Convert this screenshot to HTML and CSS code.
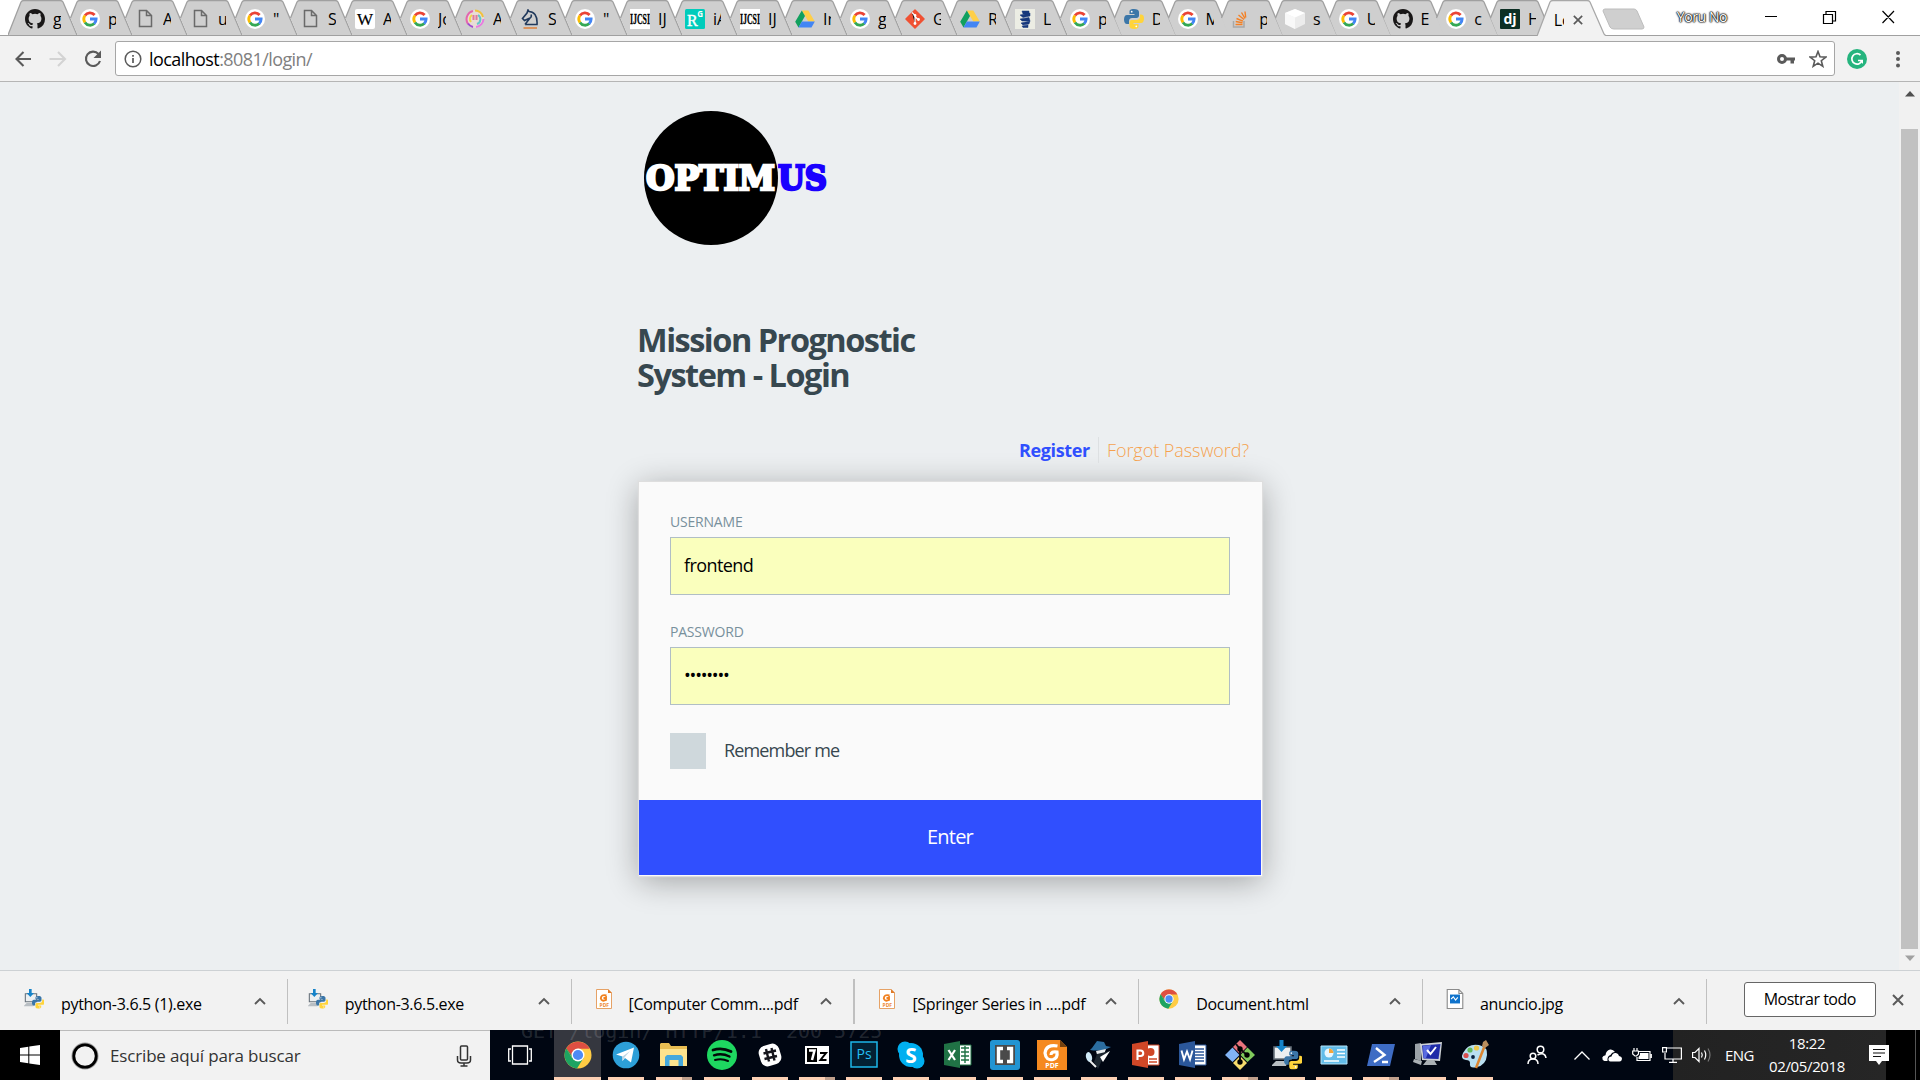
FILE: index.html
```html
<!DOCTYPE html>
<html lang="es">
<head>
<meta charset="utf-8">
<title>Login</title>
<link rel="stylesheet" href="styles.css">
</head>
<body>
<svg class="defs" aria-hidden="true">
  <symbol id="tab" viewBox="0 0 70 35"><path d="M14.500 35 7.500 18 14 2Q15 .5 17 .5H52Q54 .5 55 2L69 35Z" fill="#cfcfcf"/><path d="M7.500 18 14 2Q15 .5 17 .5H52Q54 .5 55 2L69 35" fill="none" stroke="#a0a0a0" stroke-width="1.300"/></symbol>
  <symbol id="tab-first" viewBox="0 0 70 35"><path d="M0 35 13 2Q14 .5 16 .5H52Q54 .5 55 2L69 35" fill="#cfcfcf" stroke="#a0a0a0" stroke-width="1.300"/></symbol>
  <symbol id="tab-active" viewBox="0 0 70 36"><path d="M0 36 13 2Q14 .5 16 .5H50Q52 .5 53 2L67 34 69 36" fill="#f2f2f2" stroke="#a8a8a8" stroke-width="1.300"/></symbol>
  <symbol id="github" viewBox="0 0 16 16"><path fill="#191717" d="M8 0C3.580 0 0 3.580 0 8c0 3.540 2.290 6.530 5.470 7.590.4.070.55-.17.55-.38 0-.19-.01-.82-.01-1.490-2.010.37-2.530-.49-2.690-.94-.09-.23-.48-.94-.82-1.130-.28-.15-.68-.52-.01-.53.63-.01 1.080.58 1.230.82.72 1.210 1.870.87 2.330.66.070-.52.28-.87.51-1.070-1.780-.2-3.640-.89-3.640-3.950 0-.87.31-1.590.82-2.150-.08-.2-.36-1.020.08-2.120 0 0 .67-.21 2.200.82a7.600 7.600 0 0 1 4 0c1.530-1.040 2.200-.82 2.200-.82.44 1.100.16 1.920.08 2.120.51.56.82 1.270.82 2.150 0 3.070-1.870 3.750-3.650 3.950.29.25.54.73.54 1.480 0 1.070-.01 1.930-.01 2.200 0 .21.15.46.55.38A8 8 0 0 0 16 8c0-4.420-3.580-8-8-8z"/></symbol>
  <symbol id="google" viewBox="0 0 20 20"><circle cx="10" cy="10" r="10" fill="#fff"/><g fill="none" stroke-width="2.900"><path d="M5 6.500A6.100 6.100 0 0 1 14.600 6" stroke="#ea4335"/><path d="M5 13.500A6.100 6.100 0 0 1 5 6.500" stroke="#fbbc05"/><path d="M14.300 14.500A6.100 6.100 0 0 1 5 13.500" stroke="#34a853"/><path d="M10 10H16.100A6.100 6.100 0 0 1 14.100 14.600" stroke="#4285f4"/></g></symbol>
  <symbol id="doc" viewBox="0 0 20 20"><path d="M4.500 1.500H11.500L16.500 6.500V17.500H4.500ZM11.500 1.500V6.500H16.500" fill="none" stroke="#6a6a6a" stroke-width="1.500"/></symbol>
  <symbol id="wiki" viewBox="0 0 20 20"><rect width="20" height="20" rx="2" fill="#fff"/><text x="10" y="15.500" font-family="Liberation Serif" font-size="17" text-anchor="middle" fill="#000" stroke="#000" stroke-width=".2">W</text></symbol>
  <symbol id="ring" viewBox="0 0 20 20"><circle cx="10" cy="10" r="9" fill="#e9dcd6"/><g fill="none" stroke-width="2"><path d="M3 15A8.500 8.500 0 0 1 8 2" stroke="#e466ae"/><path d="M10 1.500A8.500 8.500 0 0 1 18 8" stroke="#f0c23c"/><path d="M18.500 10A8.500 8.500 0 0 1 11 18" stroke="#e87be0"/><path d="M8 18A8.500 8.500 0 0 1 3 14.500" stroke="#a04ad0"/><path d="M6 13A5 5 0 0 1 7 6" stroke="#efd548"/><path d="M13 6A5 5 0 0 1 12 15" stroke="#64c7c9"/><path d="M8.500 6V11M11.500 6V11" stroke="#e07a9c"/></g></symbol>
  <symbol id="knight" viewBox="0 0 20 20"><path d="M5 15.500H17Q17.500 9 15 5.500 12.500 2.500 9 2.500L8 1 7 4 2.500 9.500 4.500 11.500 10 9 5 15.500M10 9Q12 8 11 5.500" fill="none" stroke="#20395c" stroke-width="1.600"/><path d="M3.500 19H17" stroke="#dc8a4b" stroke-width="1.700"/></symbol>
  <symbol id="ijcsi" viewBox="0 0 20 20"><path fill="#fff" d="M0 0H20V20H0Z"/><text x="0" y="14.500" font-family="Liberation Serif" font-weight="bold" font-size="14" textLength="20" lengthAdjust="spacingAndGlyphs" stroke="#000" stroke-width=".3">IJCSI</text></symbol>
  <symbol id="rg" viewBox="0 0 20 20"><rect width="20" height="20" rx="1.500" fill="#00ccbb"/><text x="2" y="17" font-family="Liberation Serif" font-size="16" fill="#fff" stroke="#fff" stroke-width=".4">R</text><text x="12.200" y="8" font-family="Open Sans" font-weight="bold" font-size="8" fill="#fff">G</text></symbol>
  <symbol id="drive" viewBox="0 0 20 20"><path d="M6.800 1.500H13.300L19.800 12.600H13.300Z" fill="#ffcf48"/><path d="M6.800 1.500 10 7 3.500 18.500.2 12.800Z" fill="#11a05e"/><path d="M6.800 12.600H19.800L16.500 18.500H3.500Z" fill="#4285f4"/></symbol>
  <symbol id="git" viewBox="0 0 20 20"><path d="M10 1 19 10 10 19 1 10Z" fill="#f05133" stroke="#f05133" stroke-width="1.500" stroke-linejoin="round"/><path d="M7 3.500 10 6.500V15M10 7.500 13.500 11" stroke="#fff" stroke-width="1.200"/><g fill="#fff"><circle cx="10" cy="6.500" r="1.400"/><circle cx="10" cy="14.500" r="1.400"/><circle cx="13.500" cy="10.500" r="1.400"/></g></symbol>
  <symbol id="leaf" viewBox="0 0 20 20"><path d="M0 0H20V20H0Z" fill="#ecede4"/><path d="M7 2H14V5H8ZM5 6 15 4V7L8 8.500ZM5 10 14 8.500 15 12 7 12ZM6 14 15 12 14 15 8 16ZM7 17 13 16V18.500H8Z" fill="#17387c" stroke="#17387c" stroke-width=".5"/></symbol>
  <symbol id="python" viewBox="0 0 20 20"><path d="M10 0C6 0 5.500 1.400 5.500 3V5H10.500V6H3C1 6 0 8 0 10.500S1 15 3 15H5V12C5 10 6.500 9 8 9H12.500C14 9 15 8 15 6.500V3C15 1 13 0 10 0Z" fill="#3b76a8"/><path d="M10 20C14 20 14.500 18.600 14.500 17V15H9.500V14H17C19 14 20 12 20 9.500S19 5.500 17 5.500H16V8C16 10 14 11 12.500 11H8C6 11 5.500 12 5.500 13.500V17C5.500 19 7 20 10 20Z" fill="#ffd43b"/><circle cx="7.700" cy="2.700" r=".9" fill="#fff"/><circle cx="12.300" cy="17.300" r=".9" fill="#fff"/></symbol>
  <symbol id="stack" viewBox="0 0 20 20"><path d="M2.500 12V18H13V12" fill="none" stroke="#a8a8a8" stroke-width="1.500"/><path d="M4.500 15.500H11.500M4.700 12.500 11.500 13.800M5.500 9.500 12 12.200M7.500 6 13 10.500M10.500 3.500 14 9.500M14 2.500 14.700 8.500" stroke="#f48024" stroke-width="1.400"/></symbol>
  <symbol id="cube" viewBox="0 0 20 20"><path d="M10 0 20 4V15L10 20 0 15V4Z" fill="#ececec"/><path d="M0 4 10 8.500V20L0 15Z" fill="#f8f8f8"/><path d="M0 4 10 0 20 4 10 8.500Z" fill="#fff"/></symbol>
  <symbol id="django" viewBox="0 0 20 20"><rect width="20" height="20" rx="1" fill="#0c2f24"/><text x="10" y="15" text-anchor="middle" font-family="Open Sans" font-weight="bold" font-size="14" fill="#fff">dj</text></symbol>
  <symbol id="chrome" viewBox="0 0 28 28"><circle cx="14" cy="14" r="13.500" fill="#fc4"/><path d="M2.300 7.300A13.500 13.500 0 0 0 13 27.500L19.500 17 14 14 8 17Z" fill="#1da462"/><path d="M2.300 7.300 8.200 17 14 14 14 7.300Z" fill="#1da462"/><path d="M2.300 7.300A13.500 13.500 0 0 1 25.700 7.800H14Q8.500 8.500 7.800 14.500Z" fill="#de4f42"/><circle cx="14" cy="14" r="6.500" fill="#fff"/><circle cx="14" cy="14" r="5.100" fill="#4c8bf5"/></symbol>
  <symbol id="installer" viewBox="0 0 30 30"><path d="M2 7H19V19H2Z" fill="#eceff1" stroke="#66707a" stroke-width="1.600"/><path d="M0 25 4 21H16L14 26H0Z" fill="#b8bec3"/><path d="M7.500 0H11.500V6H15L9.500 12 4 6H7.500Z" fill="#1583c9"/><svg x="12" y="10" width="19" height="20" viewBox="0 0 20 20"><use href="#python"/></svg></symbol>
  <symbol id="pdf" viewBox="0 0 16 20"><path d="M.5.500H12L15.500 4V19.500H.5Z" fill="#fff" stroke="#e6a266"/><path d="M12 0V4H16Z" fill="#e07b28"/><path d="M10.500 6.500Q5 5 4.800 9.500 6 13 10 11V8.500L7.500 9.500" fill="none" stroke="#f0801f" stroke-width="1.900"/><text x="3.500" y="17.500" font-family="Open Sans" font-weight="bold" font-size="5" fill="#ee8a35">PDF</text></symbol>
  <symbol id="image" viewBox="0 0 15 18"><path d="M.5.500H11L14.500 4V17.500H.5ZM11 .5V4H14.500" fill="#fff" stroke="#8b8b8b"/><path d="M3 5H12V13H3Z" fill="#0f73cc"/><path d="M4 9 6 7 8 10 10 7.500" fill="none" stroke="#fff"/></symbol>
  <symbol id="chevron" viewBox="0 0 12 8"><path d="M1 7 6 2 11 7" fill="none" stroke="#5a5a5a" stroke-width="1.900"/></symbol>
  <symbol id="cross" viewBox="0 0 12 12"><path d="M1 1 11 11M11 1 1 11" stroke="#5a5a5a" stroke-width="2"/></symbol>
</svg>

<header class="tabstrip">
  <nav class="tabs">
    <div class="tab"><svg class="shape"><use href="#tab-first"/></svg><svg class="fav"><use href="#github"/></svg><span>g</span></div>
    <div class="tab"><svg class="shape"><use href="#tab"/></svg><svg class="fav"><use href="#google"/></svg><span>p</span></div>
    <div class="tab"><svg class="shape"><use href="#tab"/></svg><svg class="fav"><use href="#doc"/></svg><span>A</span></div>
    <div class="tab"><svg class="shape"><use href="#tab"/></svg><svg class="fav"><use href="#doc"/></svg><span>u</span></div>
    <div class="tab"><svg class="shape"><use href="#tab"/></svg><svg class="fav"><use href="#google"/></svg><span>"</span></div>
    <div class="tab"><svg class="shape"><use href="#tab"/></svg><svg class="fav"><use href="#doc"/></svg><span>S</span></div>
    <div class="tab"><svg class="shape"><use href="#tab"/></svg><svg class="fav"><use href="#wiki"/></svg><span>A</span></div>
    <div class="tab"><svg class="shape"><use href="#tab"/></svg><svg class="fav"><use href="#google"/></svg><span>Jo</span></div>
    <div class="tab"><svg class="shape"><use href="#tab"/></svg><svg class="fav"><use href="#ring"/></svg><span>A</span></div>
    <div class="tab"><svg class="shape"><use href="#tab"/></svg><svg class="fav"><use href="#knight"/></svg><span>S</span></div>
    <div class="tab"><svg class="shape"><use href="#tab"/></svg><svg class="fav"><use href="#google"/></svg><span>"</span></div>
    <div class="tab"><svg class="shape"><use href="#tab"/></svg><svg class="fav"><use href="#ijcsi"/></svg><span>IJ</span></div>
    <div class="tab"><svg class="shape"><use href="#tab"/></svg><svg class="fav"><use href="#rg"/></svg><span>iA</span></div>
    <div class="tab"><svg class="shape"><use href="#tab"/></svg><svg class="fav"><use href="#ijcsi"/></svg><span>IJ</span></div>
    <div class="tab"><svg class="shape"><use href="#tab"/></svg><svg class="fav"><use href="#drive"/></svg><span>In</span></div>
    <div class="tab"><svg class="shape"><use href="#tab"/></svg><svg class="fav"><use href="#google"/></svg><span>g</span></div>
    <div class="tab"><svg class="shape"><use href="#tab"/></svg><svg class="fav"><use href="#git"/></svg><span>G</span></div>
    <div class="tab"><svg class="shape"><use href="#tab"/></svg><svg class="fav"><use href="#drive"/></svg><span>R</span></div>
    <div class="tab"><svg class="shape"><use href="#tab"/></svg><svg class="fav"><use href="#leaf"/></svg><span>L</span></div>
    <div class="tab slim"><svg class="shape"><use href="#tab"/></svg><svg class="fav"><use href="#google"/></svg><span>p</span></div>
    <div class="tab slim"><svg class="shape"><use href="#tab"/></svg><svg class="fav"><use href="#python"/></svg><span>D</span></div>
    <div class="tab slim"><svg class="shape"><use href="#tab"/></svg><svg class="fav"><use href="#google"/></svg><span>M</span></div>
    <div class="tab slim"><svg class="shape"><use href="#tab"/></svg><svg class="fav"><use href="#stack"/></svg><span>p</span></div>
    <div class="tab slim"><svg class="shape"><use href="#tab"/></svg><svg class="fav"><use href="#cube"/></svg><span>s</span></div>
    <div class="tab slim"><svg class="shape"><use href="#tab"/></svg><svg class="fav"><use href="#google"/></svg><span>U</span></div>
    <div class="tab slim"><svg class="shape"><use href="#tab"/></svg><svg class="fav"><use href="#github"/></svg><span>E</span></div>
    <div class="tab slim"><svg class="shape"><use href="#tab"/></svg><svg class="fav"><use href="#google"/></svg><span>c</span></div>
    <div class="tab slim"><svg class="shape"><use href="#tab"/></svg><svg class="fav"><use href="#django"/></svg><span>H</span></div>
    <div class="tab active"><svg class="shape"><use href="#tab-active"/></svg><span>Lo</span><svg class="close"><use href="#cross"/></svg></div>
  </nav>
  <svg class="newtab" viewBox="0 0 43 22"><path d="M3 1H32Q34 1 35 3L42 19Q42 21 40 21H12Q9 21 8 19L1 3Q1 1 3 1Z" fill="#cfcfcf" stroke="#bdbdbd"/></svg>
  <span class="profile">Yoru No</span>
  <svg class="winbtns" viewBox="0 0 130 14" fill="none" stroke="#000" stroke-width="1.200"><path d="M0 6.500H12M58.500 4.500H67.500V13.500H58.500ZM61 4V1.500H70.500V11H68M117.500 1 129 13M129 1 117.500 13"/></svg>
</header>

<div class="toolbar">
  <svg class="nav" viewBox="0 0 96 20" fill="none" stroke-width="2.100"><path d="M17 10H2.500M9.500 3 2.500 10 9.500 17" stroke="#5a5a5a"/><path d="M35.500 10H51M44 3 51 10 44 17" stroke="#d3d3d3"/><path d="M84.500 5A7.200 7.200 0 1 0 86 12" stroke="#5a5a5a"/><path d="M87 1.500V9H79.500Z" fill="#5a5a5a"/></svg>
  <div class="omnibox">
    <svg class="info" viewBox="0 0 18 18"><circle cx="9" cy="9" r="7.800" fill="none" stroke="#5a5a5a" stroke-width="1.500"/><path d="M9 8V13M9 5V6.700" stroke="#5a5a5a" stroke-width="1.700"/></svg>
    <span class="url">localhost<i>:8081/login/</i></span>
    <svg class="key" viewBox="0 0 18 12"><circle cx="5" cy="6" r="3.500" fill="none" stroke="#5a5a5a" stroke-width="3"/><path d="M9 4.500H18V7.500H17V10.500H13.500V7.500H9Z" fill="#5a5a5a"/></svg>
    <svg class="star" viewBox="0 0 18 18"><path d="M9 1.500 11 6.800 16.800 7.100 12.300 10.700 13.800 16.300 9 13.200 4.200 16.300 5.700 10.700 1.200 7.100 7 6.800Z" fill="none" stroke="#5a5a5a" stroke-width="1.600"/></svg>
  </div>
  <svg class="gram" viewBox="0 0 20 20"><circle cx="10" cy="10" r="10" fill="#25b47e"/><path d="M13.500 6A5.200 5.200 0 1 0 15 11.500H11" fill="none" stroke="#fff" stroke-width="1.700"/><path d="M12.500 11H16V15Z" fill="#fff"/></svg>
  <svg class="dots" viewBox="0 0 4 18" fill="#5a5a5a"><circle cx="2" cy="3" r="2"/><circle cx="2" cy="9" r="2"/><circle cx="2" cy="15.500" r="2"/></svg>
</div>

<div class="viewport">
  <main class="page">
    <svg class="logo" viewBox="0 0 190 136"><circle cx="72" cy="68" r="67" fill="#000"/><g font-family="DejaVu Serif" font-weight="bold" font-size="34" stroke-width="2.600"><text x="7" y="79.500" textLength="129" lengthAdjust="spacingAndGlyphs" fill="#fff" stroke="#fff">OPTIM</text><text x="139" y="79.500" textLength="49" lengthAdjust="spacingAndGlyphs" fill="#1a00ff" stroke="#1a00ff">US</text></g></svg>
    <h1>Mission Prognostic<br>System - Login</h1>
    <div class="links"><a class="register">Register</a><a class="forgot">Forgot Password?</a></div>
    <form class="card">
      <div class="fields">
        <label>USERNAME</label>
        <div class="input">frontend</div>
        <label>PASSWORD</label>
        <div class="input dotsval">••••••••</div>
        <div class="remember"><span class="box"></span><span class="text">Remember me</span></div>
      </div>
      <div class="enter">Enter</div>
    </form>
  </main>
  <div class="scrollbar">
    <svg class="arr" viewBox="0 0 10 6"><path d="M0 5.500 5 0 10 5.500Z" fill="#505050"/></svg>
    <div class="thumb"></div>
    <svg class="arr" viewBox="0 0 10 6"><path d="M0 .5 5 6 10 .5Z" fill="#a0a0a0"/></svg>
  </div>
</div>

<div class="downloads">
  <div class="dl"><svg class="dicon"><use href="#installer"/></svg><span>python-3.6.5 (1).exe</span><svg class="chev"><use href="#chevron"/></svg></div>
  <div class="dl"><svg class="dicon"><use href="#installer"/></svg><span>python-3.6.5.exe</span><svg class="chev"><use href="#chevron"/></svg></div>
  <div class="dl thick file"><svg class="dicon"><use href="#pdf"/></svg><span>[Computer Comm....pdf</span><svg class="chev"><use href="#chevron"/></svg></div>
  <div class="dl file"><svg class="dicon"><use href="#pdf"/></svg><span>[Springer Series in ....pdf</span><svg class="chev"><use href="#chevron"/></svg></div>
  <div class="dl"><svg class="dicon"><use href="#chrome"/></svg><span>Document.html</span><svg class="chev"><use href="#chevron"/></svg></div>
  <div class="dl file"><svg class="dicon"><use href="#image"/></svg><span>anuncio.jpg</span><svg class="chev"><use href="#chevron"/></svg></div>
  <div class="showall">Mostrar todo</div>
  <svg class="dlclose"><use href="#cross"/></svg>
</div>

<footer class="taskbar">
  <div class="start"><svg viewBox="0 0 20 20" fill="#fff"><path d="M0 3 8.300 1.800V9.500H0ZM9.300 1.600 20 0V9.500H9.300ZM0 10.500H8.300V18.200L0 17ZM9.300 10.500H20V20L9.300 18.400Z"/></svg></div>
  <div class="search">
    <svg class="cortana" viewBox="0 0 28 28"><circle cx="14" cy="14" r="12.500" fill="none" stroke="#999" stroke-width="2"/><circle cx="14" cy="14" r="11.200" fill="none" stroke="#000" stroke-width="2.800"/></svg>
    <span>Escribe aquí para buscar</span>
    <svg class="mic" viewBox="0 0 16 22" fill="none" stroke="#333" stroke-width="1.500"><rect x="4.500" y="1" width="7" height="14" rx="1"/><path d="M1.500 11V15Q1.500 18 5 18H11Q14.500 18 14.500 15V11M8 18V21M4.500 21H11.500"/></svg>
  </div>
  <div class="taskview"><svg viewBox="0 0 24 20" fill="none" stroke="#fff" stroke-width="1.300"><path d="M4.500 1H19.500V19H4.500ZM3 4H.7V16H3M21 4H23.300V16H21"/></svg></div>
  <div class="apps">
    <div class="app current wide"><svg><use href="#chrome"/></svg></div>
    <div class="app wide"><svg viewBox="0 0 30 30"><circle cx="15" cy="15" r="13.300" fill="#2d9fd8"/><path d="M5 14.500 23 7.500 20 22.500 14 18 11.500 21V16.500Z" fill="#fff"/><path d="M11.500 16.500 19 11 13.500 17.500 11.500 21Z" fill="#c0d6e4"/></svg></div>
    <div class="app wide multi"><svg viewBox="0 0 30 30"><path d="M1 4 2 3H10L12 6H28V25H1Z" fill="#e9bd52"/><path d="M1 9H28V26H1Z" fill="#fde38d"/><path d="M6 26V17L8 15H22L24 17V26H19.500V20H10.500V26Z" fill="#45a8dc"/></svg></div>
    <div class="app wide"><svg viewBox="0 0 30 30"><circle cx="15" cy="15" r="15" fill="#1ed760"/><g fill="none" stroke="#020a08" stroke-linecap="round"><path d="M6 10Q15 7 24 11.500" stroke-width="2.800"/><path d="M7 15.300Q15 12.700 22.500 16.600" stroke-width="2.300"/><path d="M8 20Q15 18 21 21" stroke-width="2"/></g></svg></div>
    <div class="app"><svg viewBox="0 0 30 30"><rect x="4.500" y="4.500" width="21" height="21" rx="7" fill="#fff" transform="rotate(-17 15 15)"/><path d="M11 9 14 21.500M16.500 8 19.500 20.500M8.500 13.500 21 10.500M9.500 19 22 16" stroke="#15151c" stroke-width="2.400"/></svg></div>
    <div class="app multi"><svg viewBox="0 0 30 30"><path d="M3 6H27V24H3Z" fill="#fff"/><path d="M5 8H15V22H5Z" fill="#000"/><path d="M7 10.500H12.500L10 20" fill="none" stroke="#fff" stroke-width="2.500"/><path d="M18 13H24L18.500 20H24.500" fill="none" stroke="#000" stroke-width="2"/></svg></div>
    <div class="app"><svg viewBox="0 0 30 30"><path d="M2 2H28V27H2Z" fill="#032033" stroke="#1cb6ea" stroke-width="1.500"/><text x="15" y="19" font-family="Open Sans" font-size="14" text-anchor="middle" fill="#23bff5">Ps</text></svg></div>
    <div class="app"><svg viewBox="0 0 30 30"><circle cx="15" cy="15" r="12" fill="#00aff0"/><circle cx="9" cy="9" r="7.500" fill="#00aff0"/><circle cx="21" cy="21" r="7.500" fill="#00aff0"/><text x="15" y="22.500" font-family="Open Sans" font-weight="bold" font-size="21" text-anchor="middle" fill="#fff">S</text></svg></div>
    <div class="app"><svg viewBox="0 0 30 30"><path d="M16 5H28V25H16Z" fill="#fff" stroke="#207245"/><path d="M18 8H26M18 12H26M18 16H26M18 20H26M22 6V23" stroke="#207245" stroke-width="1.400"/><path d="M1 4 17 1V28L1 25Z" fill="#207245"/><path d="M5.500 10 12 20M12 10 5.500 20" stroke="#fff" stroke-width="2.200"/></svg></div>
    <div class="app"><svg viewBox="0 0 30 30"><rect width="30" height="30" rx="3" fill="#2394d2"/><path d="M5 5H25V25H5Z" fill="#fff"/><path d="M5 5H25V25H5Z" fill="#4a4a4a"/><path d="M13 8.500H8.500V21.500H13M17 8.500H21.500V21.500H17" fill="none" stroke="#fff" stroke-width="3.400"/></svg></div>
    <div class="app"><svg viewBox="0 0 30 30"><path d="M0 0H23L30 7V30H0Z" fill="#f5891f"/><path d="M23 0V7H30Z" fill="#73400e"/><path d="M20.500 6Q9 4 8 13 9 21 16 19.500 21 18 20 12 14 11 14 15" fill="none" stroke="#fff" stroke-width="3.200"/><text x="15" y="28" text-anchor="middle" font-family="Open Sans" font-weight="bold" font-size="7" fill="#fff">PDF</text></svg></div>
    <div class="app"><svg viewBox="0 0 30 30"><path d="M8 8 13 1 20 2 22 6 27 7Q18 12 6 10Z" fill="#2b6da0"/><path d="M12 11 22 9 19 17 14 18Z" fill="#e8ecef"/><path d="M13 14 26 11 18 20 14 29 10 22Z" fill="#1c2630"/><path d="M16 17 26 11 19 22Z" fill="#fff"/><ellipse cx="5" cy="17" rx="3" ry="5" fill="#cfe9f7" transform="rotate(-15 5 17)"/><path d="M6 21 12 27" stroke="#eee" stroke-width="2"/></svg></div>
    <div class="app"><svg viewBox="0 0 30 30"><path d="M16 5H28V25H16Z" fill="#fff" stroke="#d04727"/><circle cx="19.500" cy="12" r="4" fill="#d04727"/><path d="M18 19H26M18 22H26" stroke="#d04727" stroke-width="1.500"/><path d="M1 4 17 1V28L1 25Z" fill="#d04727"/><path d="M6.500 20V10.500H9.500A2.600 2.600 0 0 1 9.500 16H6.500" fill="none" stroke="#fff" stroke-width="2.100"/></svg></div>
    <div class="app"><svg viewBox="0 0 30 30"><path d="M16 5H28V25H16Z" fill="#fff" stroke="#2b579a"/><path d="M17 9H26M17 12H26M17 15H26M17 18H26M17 21H26" stroke="#2b579a" stroke-width="1.300"/><path d="M1 4 17 1V28L1 25Z" fill="#2b579a"/><path d="M3.500 10.500 6 19.500 9 11.500 12 19.500 14.500 10.500" fill="none" stroke="#fff" stroke-width="1.900"/></svg></div>
    <div class="app multi"><svg viewBox="0 0 30 30"><path d="M15 0 22 7 15 14 8 7Z" fill="#e9737c"/><path d="M7.500 7.500 14.500 15 7.500 22 0 15Z" fill="#82b4f5"/><path d="M22.500 7.500 30 15 22.500 22 15.500 15Z" fill="#80ca5c"/><path d="M15 16 22 23 15 30 8 23Z" fill="#f7dc6c"/><path d="M11 4 15 9V23M15 9 22 15" fill="none" stroke="#111" stroke-width="2"/><circle cx="15" cy="9" r="2.700"/><circle cx="15" cy="22" r="2.700"/><circle cx="22" cy="15" r="2.700"/></svg></div>
    <div class="app"><svg><use href="#installer"/></svg></div>
    <div class="app"><svg viewBox="0 0 30 30"><path d="M2 6H28V24H2Z" fill="#63bce9" stroke="#b4e4fa"/><circle cx="10" cy="13" r="4.500" fill="#e9f7ff"/><path d="M10 13V8.500A4.500 4.500 0 0 1 14.500 13Z" fill="#f4a53a"/><path d="M18 10H26M18 13.500H26M18 17H26M5 21H20" stroke="#fff" stroke-width="1.600"/></svg></div>
    <div class="app multi"><svg viewBox="0 0 30 30"><path d="M6 4H29L24 26H1Z" fill="#3e6cc4"/><path d="M10 8 18.500 15 8 22M16 22H22" fill="none" stroke="#fff" stroke-width="2.400"/></svg></div>
    <div class="app"><svg viewBox="0 0 30 30"><path d="M2 4 8 3V21L2 19Z" fill="#9ba2a8"/><path d="M7 4 29 2 27 21 9 20Z" fill="#cdd2d6"/><path d="M9 5.500 27.500 4 25.500 19 10.500 18.500Z" fill="#1e2ba8"/><path d="M10 6 18 5 13 18H10.500Z" fill="#5a6ce0"/><path d="M14 10 17.500 14 23 7" fill="none" stroke="#fff" stroke-width="2"/><path d="M14 20H21L24 25H10ZM1 19 9 21 8 25 0 22Z" fill="#aab0b4"/></svg></div>
    <div class="app"><svg viewBox="0 0 30 30"><path d="M3 13Q8 3 19 5 28 7 27 15 26 25 17 27 9 29 10 23 10 20 6 20 0 19 3 13Z" fill="#b9dff1"/><circle cx="6" cy="15.500" r="2.600" fill="#d94f4f"/><circle cx="10" cy="10" r="2.600" fill="#61b95b"/><circle cx="16.500" cy="8" r="2.600" fill="#eec84c"/><circle cx="13" cy="17" r="1.900" fill="#08213f"/><path d="M25 5 16 28" stroke="#dc8530" stroke-width="2.500"/><path d="M23 2 26 0 29 5 25 8 22 6Z" fill="#b98d5d"/></svg></div>
  </div>
  <div class="tray">
    <svg class="people" viewBox="0 0 20 20" fill="none" stroke="#fff" stroke-width="1.500"><circle cx="13.500" cy="4.500" r="3.300"/><circle cx="6" cy="11" r="2.800"/><path d="M1 19Q1 14 6 14T11 19M10.500 10Q18 6.500 19 13"/></svg>
    <svg class="caret" viewBox="0 0 16 9" fill="none" stroke="#fff" stroke-width="1.300"><path d="M.5 8.500 8 1 15.500 8.500"/></svg>
    <svg class="cloud" viewBox="0 0 20 13"><path d="M2.500 12Q0 11 .3 8.500 1 6.500 3.500 6.200 4 1.500 8 .5 11 0 13 3 10 3 8.500 6 5 7 5.500 12ZM8.500 12.500Q6 12 6.500 9.500 7 7.500 9.500 7.500 10.500 3.500 14 4 16.500 4.500 17 7 20 7.500 20 10 19.500 12.500 17.500 12.500Z" fill="#fff"/></svg>
    <svg class="battery" viewBox="0 0 20 14"><path d="M6.500 3.500H18V12.500H5V9M19.300 6V10M2 0V3M5 0V3M.7 3H6.500V6L4.500 8H3L.7 6Z" fill="none" stroke="#fff" stroke-width="1.200"/><path d="M8 5H16.500V11H6.500V9L8 7Z" fill="#fff"/></svg>
    <svg class="net" viewBox="0 0 20 16" fill="none" stroke="#fff" stroke-width="1.200"><path d="M5 1H19.400V12H3V6M11 12V15.500M7 15.400H15M.6.600H4.400V5H.6Z"/></svg>
    <svg class="vol" viewBox="0 0 20 16" fill="none" stroke="#fff" stroke-width="1.200"><path d="M.6 5.500H3L7 1.500V14.500L3 10.500H.6ZM9.500 5.500Q11 8 9.500 10.500M12.500 3.500Q15 8 12.500 12.500"/><path d="M16 1.500Q20 8 16 14.500" stroke="#777"/></svg>
    <span class="lang">ENG</span>
    <div class="clock"><span>18:22</span><span>02/05/2018</span></div>
    <svg class="note" viewBox="0 0 20 20"><path d="M0 0H20V16H13L10 20 7 16H0Z" fill="#fff"/><path d="M4 4.500H16M4 8H16M4 11.500H12" stroke="#111" stroke-width="1.200"/></svg>
    <span class="peek"></span>
  </div>
  <div class="ghost"><span>GET /login/ HTTP/1.1  200 5725</span></div>
</footer>
</body>
</html>
```
FILE: styles.css
```css
* { box-sizing: border-box; }
body { margin: 0; width: 1920px; height: 1080px; overflow: hidden; display: flex; flex-direction: column; font-family: "Open Sans", "Noto Sans", sans-serif; color: #000; }
svg { display: block; flex: none; }
span { white-space: pre; }
.defs { position: absolute; width: 0; height: 0; }

.tabstrip { height: 36px; flex: none; display: flex; background: linear-gradient(#a0a0a0, #a0a0a0) bottom / 100% 1px no-repeat #fff; padding-left: 8px; }
.tabs { display: flex; height: 36px; }
.tab { position: relative; width: 55px; height: 35px; flex: none; display: flex; align-items: center; padding: 3px 0 0 17px; gap: 8px; font-size: 16px; }
.tab.slim { width: 53.75px; }
.tab.active { width: 66px; height: 36px; padding-left: 17px; gap: 9px; }
.shape { position: absolute; left: 0; top: 0; width: 70px; height: 35px; }
.active .shape { height: 36px; }
.fav { position: relative; width: 20px; height: 20px; }
.tab span { position: relative; width: 8px; overflow: hidden; line-height: 22px; }
.tab.active span { width: 10px; }
.tab .close { position: relative; width: 10px; height: 10px; }
.newtab { width: 43px; height: 22px; margin: 8px 0 0 -1px; }
.profile { margin: 5px 0 0 32px; width: 50px; font-size: 14px; line-height: 23px; color: #fff; text-shadow: 0 0 1px #000, 0 0 1px #000, 0 0 2px #000, 0 0 2px #000; letter-spacing: -.4px; }
.winbtns { width: 130px; height: 14px; margin: 10px 0 0 38px; }

.toolbar { height: 46px; flex: none; background: #f2f2f2; border-bottom: 1px solid #b5b5b5; display: flex; align-items: center; padding-left: 14px; }
.nav { width: 96px; height: 20px; }
.omnibox { width: 1720px; height: 35px; margin-left: 5px; border: 1px solid #a6a6a6; border-radius: 3px; background: #fff; display: flex; align-items: center; padding-left: 8px; }
.info { width: 18px; height: 18px; }
.url { font-size: 18px; margin-left: 7px; width: 1628px; letter-spacing: -.58px; line-height: 24px; }
.url i { font-style: normal; color: #808080; }
.key { width: 18px; height: 12px; }
.star { width: 18px; height: 18px; margin-left: 14px; }
.gram { width: 20px; height: 20px; margin-left: 12px; }
.dots { width: 4px; height: 18px; margin-left: 29px; }

.viewport { height: 888px; flex: none; display: flex; background: #eceff1; }
.page { width: 1899px; padding: 28px 0 0 638px; color: #37474f; }
.logo { width: 190px; height: 136px; margin-left: 1px; }
h1 { margin: 75px 0 0 -1px; font-size: 32.5px; line-height: 35px; font-weight: 700; letter-spacing: -1.5px; padding-top: 1px; }
.links { display: flex; justify-content: flex-end; width: 611px; margin-top: 45px; font-size: 18px; line-height: 26px; height: 26px; }
.register { color: #304ffe; font-weight: 700; padding-right: 8px; letter-spacing: -.35px; }
.forgot { color: #f5a24f; font-weight: 300; padding-left: 8px; border-left: 1px solid #dde0e2; letter-spacing: -.05px; }
.card { margin: 19px 0 0 1px; width: 623px; height: 394px; background: #fafafa; box-shadow: 0 0 1px 1px #dedede, 0 5px 30px rgba(0,0,0,.32); display: flex; flex-direction: column; }
.fields { height: 318px; padding: 30px 32px 0 31px; display: flex; flex-direction: column; }
label { font-size: 14px; line-height: 20px; height: 25px; color: #78909c; letter-spacing: -.2px; }
.input { height: 58px; border: 1px solid #b0bec5; background: #faffbd; color: #000; padding: 0 13px; font-size: 18px; line-height: 55px; margin-bottom: 27px; letter-spacing: -.6px; }
.dotsval { letter-spacing: -1.2px; }
.remember { display: flex; align-items: center; gap: 18px; font-size: 18px; letter-spacing: -.85px; margin-top: 1px; }
.remember .text { padding-bottom: 3px; }
.box { width: 36px; height: 36px; background: #cfd8dc; }
.enter { width: 622px; height: 75px; background: #304ffe; color: #fff; text-align: center; font-size: 20px; line-height: 73px; font-weight: 500; letter-spacing: -.8px; }
.scrollbar { width: 21px; background: #f1f1f1; display: flex; flex-direction: column; align-items: center; justify-content: space-between; padding: 9px 0; }
.arr { width: 10px; height: 6px; }
.thumb { width: 17px; height: 820px; background: #c1c1c1; margin-top: 25px; }

.downloads { height: 60px; flex: none; background: #f2f2f2; border-top: 1px solid #cdd1d4; display: flex; padding-left: 4px; }
.dl { width: 283.8px; height: 45px; margin-top: 8px; border-right: 1px solid #c0c0c0; display: flex; align-items: center; padding: 0 21px 0 20px; font-size: 16px; flex: none; }
.dl.thick { border-right-width: 2px; }
.dicon { width: 20px; height: 20px; margin: -6px 17px 0 0; }
.dl.file .dicon { margin: -5px 15px 0 2px; }
.dl span { flex: 1; padding-top: 5px; line-height: 24px; letter-spacing: -.32px; }
.chev { width: 12px; height: 8px; margin-top: -2px; }
.showall { width: 132px; height: 35px; margin: 11px 0 0 37px; border: 1px solid #666; border-radius: 3px; background: #fff; font-size: 16px; line-height: 33px; text-align: center; letter-spacing: -.5px; }
.dlclose { width: 12px; height: 12px; margin: 23px 0 0 16px; }

.taskbar { position: relative; height: 50px; flex: none; display: flex; background: #000612; color: #fff; }
.start { width: 60px; background: #000; display: flex; align-items: center; padding-left: 20px; }
.start svg { width: 20px; height: 20px; }
.search { width: 430px; background: #f2f2f2; border-top: 1px solid #bbb; display: flex; align-items: center; color: #333; padding-left: 11px; font-size: 17px; }
.search span { margin-left: 11px; width: 346px; letter-spacing: -.16px; }
.cortana { width: 28px; height: 28px; }
.mic { width: 16px; height: 22px; }
.taskview { width: 64px; display: flex; align-items: center; padding-left: 18px; }
.taskview svg { width: 24px; height: 20px; }
.apps { display: flex; }
.app { width: 47px; height: 50px; display: flex; align-items: center; justify-content: center; background: linear-gradient(#fcd0b4, #fcd0b4) bottom / 36px 3px no-repeat; }
.app.wide { margin-right: 1px; }
.app svg { width: 30px; height: 30px; }
.app.current { background: linear-gradient(#fcd0b4, #fcd0b4) bottom / 100% 3px no-repeat #35373f; }
.app.current svg { width: 28px; height: 28px; }
.app.multi { background: linear-gradient(90deg, #fcd0b4 26px, #bf9f8c 26px) bottom / 36px 3px no-repeat; }
.tray { flex: 1; display: flex; align-items: center; padding-left: 29px; background: linear-gradient(90deg, transparent 175px, #222 175px, #262626 388px, #000 388px); }
.people { width: 20px; height: 20px; }
.caret { width: 16px; height: 9px; margin-left: 27px; }
.cloud { width: 20px; height: 13px; margin-left: 12px; }
.battery { width: 20px; height: 14px; margin-left: 10px; }
.net { width: 20px; height: 16px; margin-left: 10px; }
.vol { width: 20px; height: 16px; margin-left: 10px; }
.lang { width: 32px; margin-left: 13px; font-size: 15px; letter-spacing: -.6px; }
.clock { width: 84px; margin-left: 8px; display: flex; flex-direction: column; align-items: center; font-size: 15px; line-height: 23.500px; letter-spacing: -.35px; }
.note { width: 20px; height: 20px; margin-left: 20px; }
.peek { width: 1px; height: 50px; background: #555; margin-left: 26px; }
.ghost { position: absolute; left: 490px; top: 0; width: 420px; height: 14px; overflow: hidden; }
.ghost span { position: absolute; left: 31px; top: -11px; font: 20px/24px "DejaVu Sans Mono", monospace; color: rgba(255,255,255,.14); }
```
